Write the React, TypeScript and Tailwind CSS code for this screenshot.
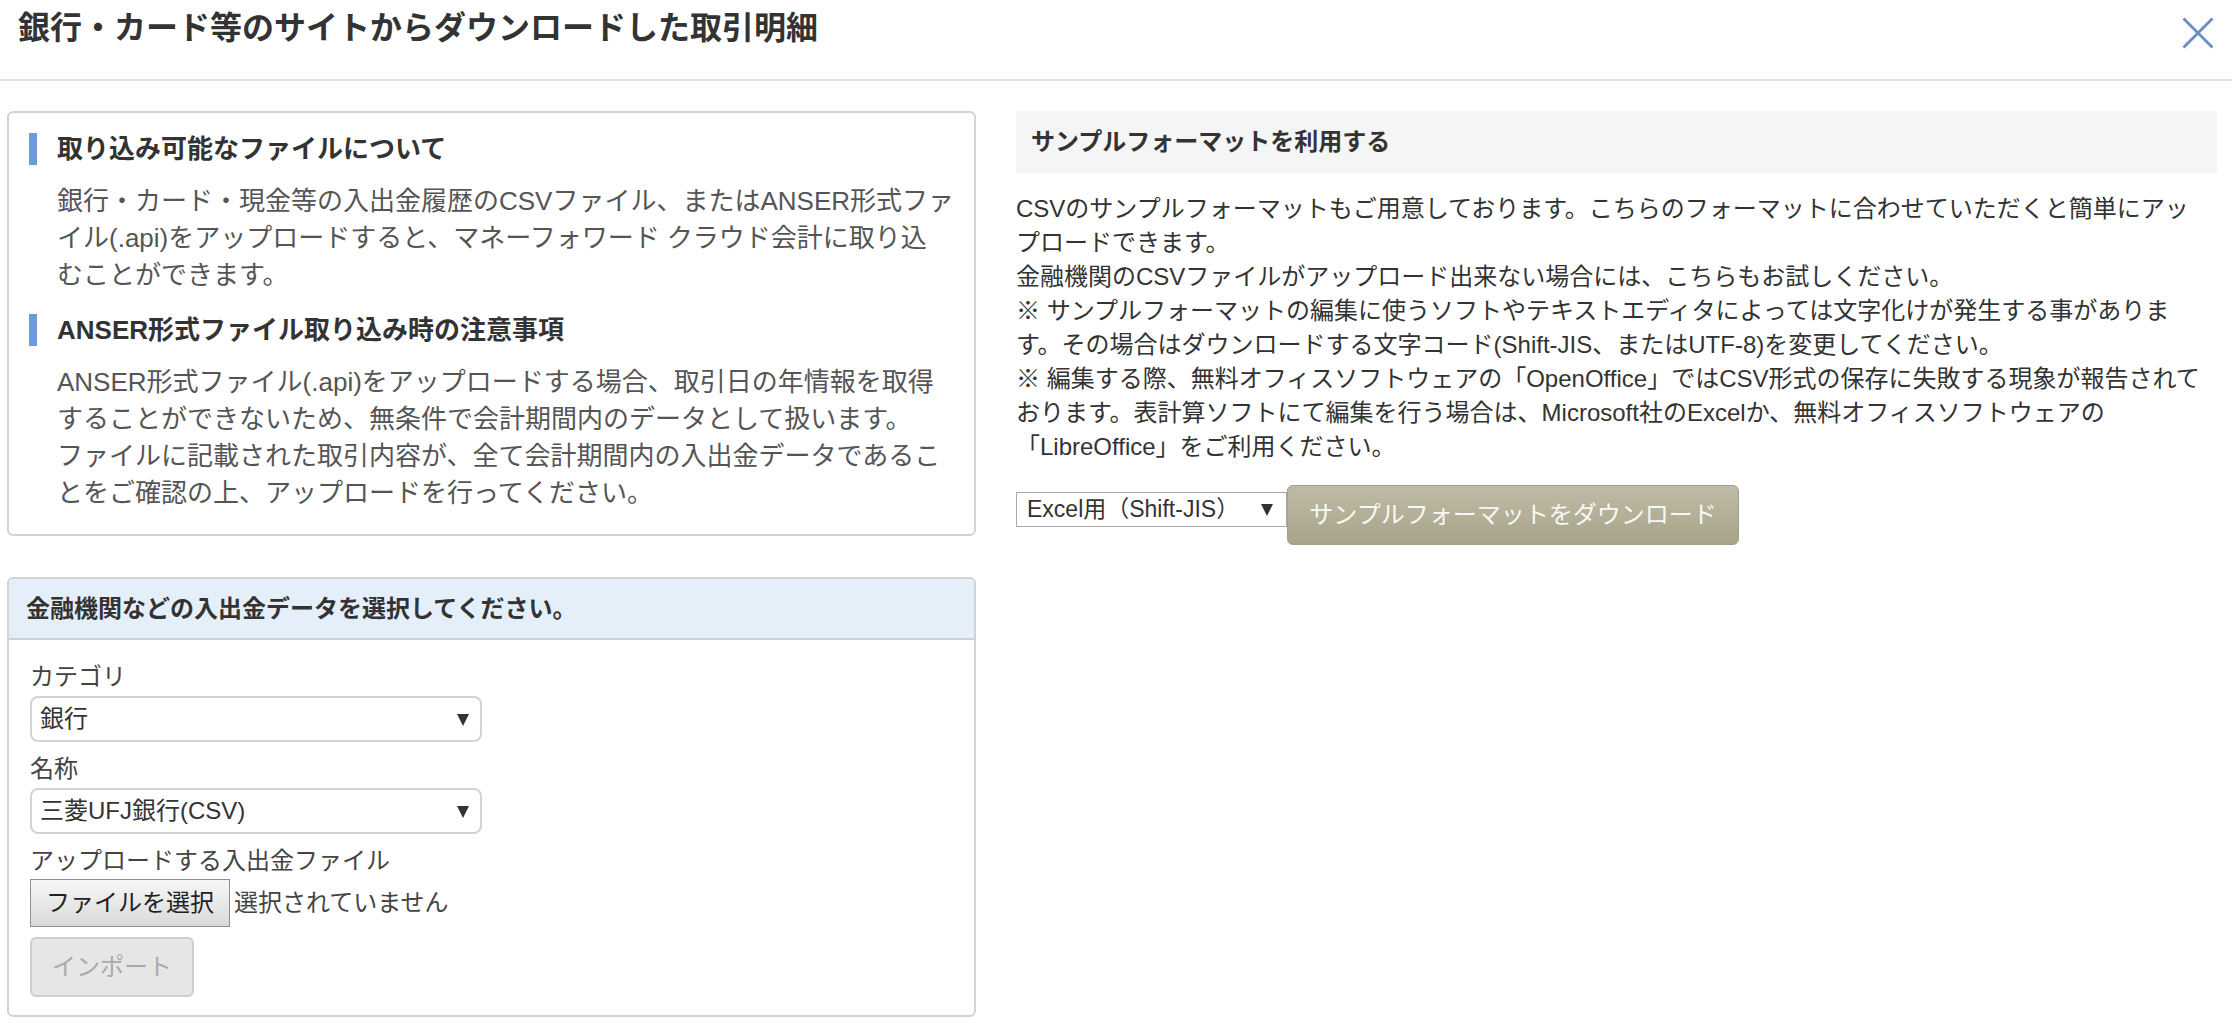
import React from "react";

const Arrow = () => (
  <svg width="12" height="13" viewBox="0 0 12 13" className="shrink-0">
    <polygon points="0,1 12,1 6,13" fill="#333" />
  </svg>
);

export default function App() {
  const font = "font-['Liberation_Sans','Noto_Sans_CJK_JP',sans-serif]";
  return (
    <div className={`w-[2232px] h-[1032px] bg-white overflow-hidden ${font}`}>
      {/* Header */}
      <div className="h-[81px] border-b-2 border-[#e3e3e3] flex items-start justify-between pl-[18px] pr-[18px]">
        <div className="pt-[6px] text-[32px] leading-[44px] font-bold text-[#333] whitespace-nowrap">
          銀行・カード等のサイトからダウンロードした取引明細
        </div>
        <svg width="32" height="32" viewBox="0 0 32 32" className="mt-[17px]">
          <line x1="1.5" y1="1.5" x2="30.5" y2="30.5" stroke="#6d8dc1" strokeWidth="2.8" />
          <line x1="30.5" y1="1.5" x2="1.5" y2="30.5" stroke="#6d8dc1" strokeWidth="2.8" />
        </svg>
      </div>

      {/* Body */}
      <div className="flex items-start gap-[40px] pt-[30px] pl-[7px] pr-[15px]">
        {/* Left column */}
        <div className="w-[969px] shrink-0 flex flex-col">
          {/* Box 1 */}
          <div className="border-2 border-[#d3d3d3] rounded-[6px] pt-[20px] pb-[22px] pl-[20px] pr-[10px]">
            <div className="border-l-[8px] border-[#6e9ad8] pl-[20px] text-[26px] leading-[32px] font-bold text-[#333] whitespace-nowrap">
              取り込み可能なファイルについて
            </div>
            <div className="mt-[18px] pl-[28px] text-[26px] leading-[37px] text-[#555] whitespace-nowrap">
              銀行・カード・現金等の入出金履歴のCSVファイル、またはANSER形式ファ
              <br />
              イル(.api)をアップロードすると、マネーフォワード クラウド会計に取り込
              <br />
              むことができます。
            </div>
            <div className="mt-[20px] border-l-[8px] border-[#6e9ad8] pl-[20px] text-[26px] leading-[32px] font-bold text-[#333] whitespace-nowrap">
              ANSER形式ファイル取り込み時の注意事項
            </div>
            <div className="mt-[18px] pl-[28px] text-[26px] leading-[37px] text-[#555] whitespace-nowrap">
              ANSER形式ファイル(.api)をアップロードする場合、取引日の年情報を取得
              <br />
              することができないため、無条件で会計期間内のデータとして扱います。
              <br />
              ファイルに記載された取引内容が、全て会計期間内の入出金データであるこ
              <br />
              とをご確認の上、アップロードを行ってください。
            </div>
          </div>

          {/* Box 2 */}
          <div className="mt-[41px] border-2 border-[#d3d3d3] rounded-[6px] overflow-hidden">
            <div className="h-[61px] bg-[#e5effa] border-b-2 border-[#cfcfcf] flex items-center pl-[17px] text-[24px] font-bold text-[#333] whitespace-nowrap">
              金融機関などの入出金データを選択してください。
            </div>
            <div className="pt-[20px] pb-[18px] pl-[21px] flex flex-col items-start">
              <div className="text-[24px] leading-[34px] text-[#444]">カテゴリ</div>
              <div className="mt-[2px] w-[452px] h-[46px] border-2 border-[#d3d3d3] rounded-[8px] flex items-center justify-between pl-[8px] pr-[11px] text-[24px] text-[#333]">
                <span>銀行</span>
                <Arrow />
              </div>
              <div className="mt-[10px] text-[24px] leading-[34px] text-[#444]">名称</div>
              <div className="mt-[2px] w-[452px] h-[46px] border-2 border-[#d3d3d3] rounded-[8px] flex items-center justify-between pl-[8px] pr-[11px] text-[24px] text-[#333]">
                <span>三菱UFJ銀行(CSV)</span>
                <Arrow />
              </div>
              <div className="mt-[10px] text-[24px] leading-[34px] text-[#444]">アップロードする入出金ファイル</div>
              <div className="mt-[1px] flex items-center">
                <div className="w-[200px] h-[48px] border border-[#8f8f8f] bg-gradient-to-b from-[#f7f7f7] to-[#dadada] flex items-center justify-center text-[24px] text-[#222]">
                  ファイルを選択
                </div>
                <span className="ml-[4px] text-[24px] text-[#444]">選択されていません</span>
              </div>
              <div className="mt-[10px] w-[164px] h-[60px] border-2 border-[#cfcfcf] rounded-[6px] bg-[#e6e6e6] flex items-center justify-center text-[24px] text-[#aaa]">
                インポート
              </div>
            </div>
          </div>
        </div>

        {/* Right column */}
        <div className="flex-1 flex flex-col">
          <div className="h-[62px] bg-[#f5f5f5] flex items-center pl-[15px] text-[24px] font-bold text-[#333] whitespace-nowrap">
            サンプルフォーマットを利用する
          </div>
          <div className="mt-[19px] text-[24px] leading-[34px] text-[#333] whitespace-nowrap">
            CSVのサンプルフォーマットもご用意しております。こちらのフォーマットに合わせていただくと簡単にアッ
            <br />
            プロードできます。
            <br />
            金融機関のCSVファイルがアップロード出来ない場合には、こちらもお試しください。
            <br />
            ※ サンプルフォーマットの編集に使うソフトやテキストエディタによっては文字化けが発生する事がありま
            <br />
            す。その場合はダウンロードする文字コード(Shift-JIS、またはUTF-8)を変更してください。
            <br />
            ※ 編集する際、無料オフィスソフトウェアの「OpenOffice」ではCSV形式の保存に失敗する現象が報告されて
            <br />
            おります。表計算ソフトにて編集を行う場合は、Microsoft社のExcelか、無料オフィスソフトウェアの
            <br />
            「LibreOffice」をご利用ください。
          </div>
          <div className="mt-[21px] flex items-start">
            <div className="mt-[7px] w-[271px] h-[35px] border border-[#a9a9a9] flex items-center justify-between pl-[10px] pr-[13px] text-[23px] text-[#333] whitespace-nowrap">
              <span>Excel用（Shift-JIS）</span>
              <Arrow />
            </div>
            <div className="w-[452px] h-[60px] rounded-[6px] border border-[#a4a088] bg-gradient-to-b from-[#bebba6] to-[#a8a48a] flex items-center justify-center text-[24px] text-[#f8f8f4] whitespace-nowrap">
              サンプルフォーマットをダウンロード
            </div>
          </div>
        </div>
      </div>
    </div>
  );
}
